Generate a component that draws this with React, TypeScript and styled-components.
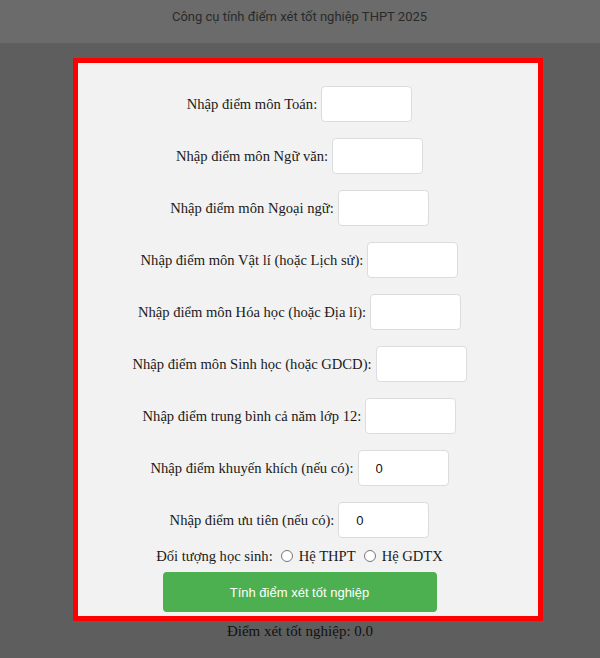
import React from "react";
import styled, { createGlobalStyle } from "styled-components";

const GlobalStyle = createGlobalStyle`
  html, body {
    margin: 0;
    padding: 0;
    background: #5e5e5e;
    min-height: 100%;
  }
`;

const fields = [
  { label: "Nhập điểm môn Toán:", value: "" },
  { label: "Nhập điểm môn Ngữ văn:", value: "" },
  { label: "Nhập điểm môn Ngoại ngữ:", value: "" },
  { label: "Nhập điểm môn Vật lí (hoặc Lịch sử):", value: "" },
  { label: "Nhập điểm môn Hóa học (hoặc Địa lí):", value: "" },
  { label: "Nhập điểm môn Sinh học (hoặc GDCD):", value: "" },
  { label: "Nhập điểm trung bình cả năm lớp 12:", value: "" },
  { label: "Nhập điểm khuyến khích (nếu có):", value: "0" },
  { label: "Nhập điểm ưu tiên (nếu có):", value: "0" },
];

const App: React.FC = () => {
  return (
    <Page>
      <GlobalStyle />
      <Header>Công cụ tính điểm xét tốt nghiệp THPT 2025</Header>
      <Panel>
        <FieldList>
          {fields.map((f) => (
            <Field key={f.label}>
              <label>{f.label}</label>
              <ScoreInput type="text" defaultValue={f.value} />
            </Field>
          ))}
        </FieldList>
        <Choice>
          <span>Đối tượng học sinh:</span>
          <input type="radio" name="he" />
          <span>Hệ THPT</span>
          <input type="radio" name="he" />
          <span>Hệ GDTX</span>
        </Choice>
        <Submit>Tính điểm xét tốt nghiệp</Submit>
      </Panel>
      <Result>Điểm xét tốt nghiệp: 0.0</Result>
    </Page>
  );
};

export default App;

const Page = styled.div`
  width: 600px;
  min-height: 658px;
  background: #5e5e5e;
  font-family: "Liberation Serif", "Times New Roman", serif;
`;

const Header = styled.div`
  display: flex;
  justify-content: center;

  box-sizing: border-box;
  height: 43px;
  padding: 8px 1px 0 0;
  line-height: 18px;

  background: #6b6b6b;
  color: #2a2a2a;

  font-family: Roboto, "Liberation Sans", sans-serif;
  font-size: 13px;
`;

const Panel = styled.div`
  box-sizing: border-box;

  display: flex;
  flex-direction: column;
  align-items: center;

  width: 470px;
  margin: 15px 0 0 73px;
  padding: 23px 17px 4px 0;

  border: 5px solid #ff0000;
  background: #f2f2f2;
`;

const FieldList = styled.div`
  display: flex;
  flex-direction: column;
  align-items: center;
  gap: 16px;
`;

const Field = styled.div`
  display: flex;
  align-items: center;

  height: 36px;

  font-size: 14.6px;
  color: #1a1a1a;
`;

const ScoreInput = styled.input`
  box-sizing: border-box;

  width: 91px;
  height: 36px;
  margin-left: 4px;
  padding: 0 17px;

  border: 1px solid #dcdcdc;
  border-radius: 4px;
  background: #fff;

  font-family: "Liberation Sans", Arial, sans-serif;
  font-size: 13px;
  color: #111;
  outline: none;
`;

const Choice = styled.div`
  display: flex;
  align-items: center;

  margin-top: 8px;
  height: 20px;

  font-size: 14.6px;
  color: #1a1a1a;

  input {
    margin: 0 6px 0 8px;
    width: 12px;
    height: 12px;
  }
`;

const Submit = styled.button`
  width: 274px;
  height: 40px;
  margin-top: 6px;

  border: none;
  border-radius: 4px;
  background: #4caf50;
  color: #fff;

  font-family: "Liberation Sans", Arial, sans-serif;
  font-size: 13px;
  cursor: pointer;
`;

const Result = styled.div`
  width: 600px;
  padding: 0 1px 0 0;
  margin-top: 1px;
  text-align: center;

  font-size: 15px;
  line-height: 18px;
  color: #111;
`;
